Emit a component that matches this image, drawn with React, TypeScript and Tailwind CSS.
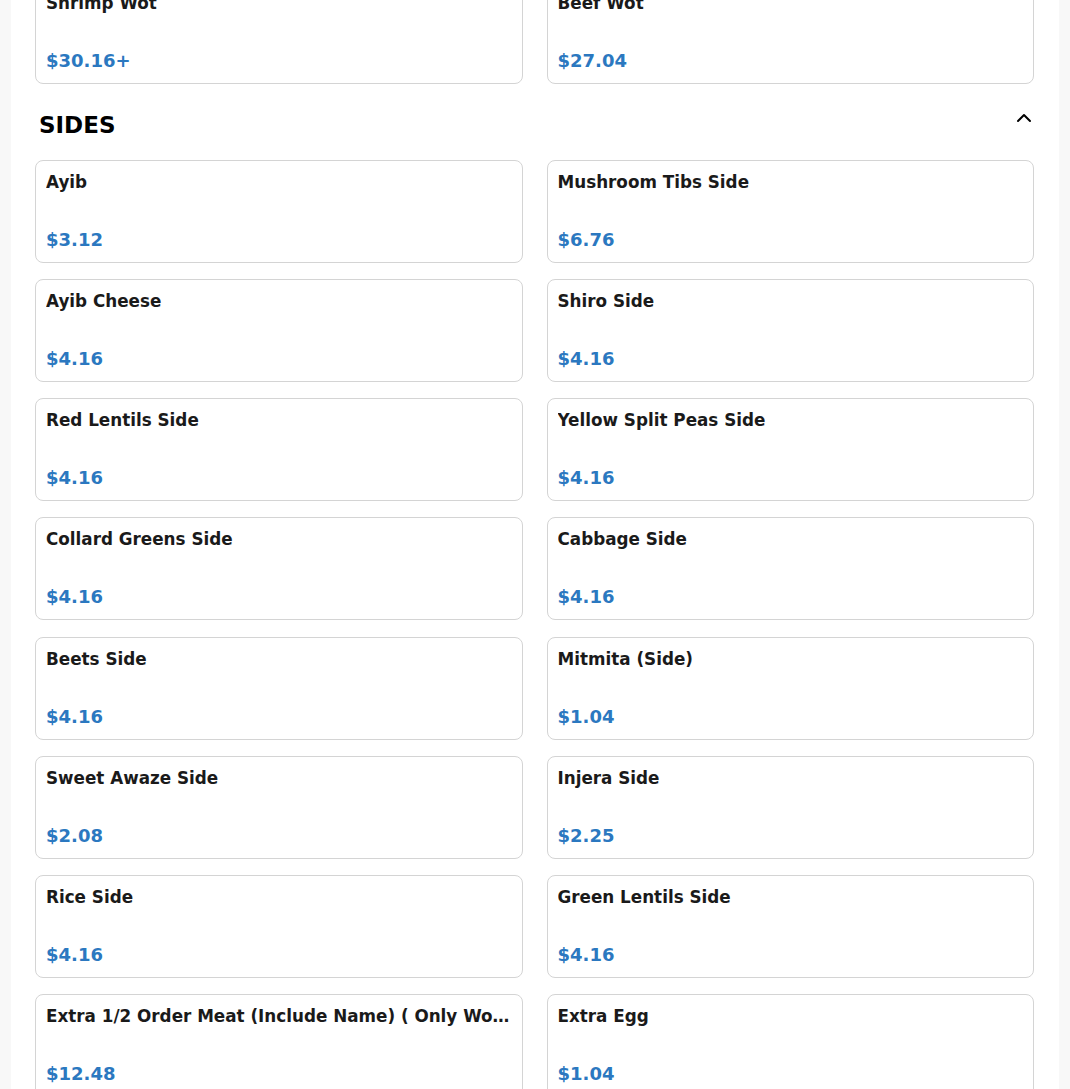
type Item = { name: string; price: string };

const previous: Item[] = [
  { name: "Shrimp Wot", price: "$30.16+" },
  { name: "Beef Wot", price: "$27.04" },
];

const sides: Item[] = [
  { name: "Ayib", price: "$3.12" },
  { name: "Mushroom Tibs Side", price: "$6.76" },
  { name: "Ayib Cheese", price: "$4.16" },
  { name: "Shiro Side", price: "$4.16" },
  { name: "Red Lentils Side", price: "$4.16" },
  { name: "Yellow Split Peas Side", price: "$4.16" },
  { name: "Collard Greens Side", price: "$4.16" },
  { name: "Cabbage Side", price: "$4.16" },
  { name: "Beets Side", price: "$4.16" },
  { name: "Mitmita (Side)", price: "$1.04" },
  { name: "Sweet Awaze Side", price: "$2.08" },
  { name: "Injera Side", price: "$2.25" },
  { name: "Rice Side", price: "$4.16" },
  { name: "Green Lentils Side", price: "$4.16" },
  { name: "Extra 1/2 Order Meat (Include Name) ( Only Works With Combos )", price: "$12.48" },
  { name: "Extra Egg", price: "$1.04" },
];

function MenuCard({ item }: { item: Item }) {
  return (
    <div className="flex h-[103px] min-w-0 flex-col justify-between rounded-lg border border-[#d4d4d4] bg-white px-[10px] py-[9px]">
      <h3 className="truncate text-[16.8px] font-bold leading-[24px] text-[#1a1a1a]">
        {item.name}
      </h3>
      <p className="text-[18px] font-bold leading-[27px] text-[#2b78c0]">
        {item.price}
      </p>
    </div>
  );
}

export default function App() {
  return (
    <div
      className="min-h-screen bg-[#f8f8f8]"
      style={{ fontFamily: '"DejaVu Sans", "Liberation Sans", sans-serif' }}
    >
      <main className="mx-[11px] min-h-screen overflow-hidden bg-white pl-6 pr-[25px]">
        <section className="-mt-[19px] grid grid-cols-2 gap-x-6 gap-y-[16.14px]">
          {previous.map((item) => (
            <MenuCard key={item.name} item={item} />
          ))}
        </section>
        <section>
          <div className="mt-[24px] mb-[18px] flex items-start justify-between pl-1">
            <h2 className="text-[23px] font-bold leading-[34px] text-black">SIDES</h2>
            <svg
              viewBox="0 0 16 10"
              className="mt-[5px] mr-[2px] h-[10px] w-[16px]"
              fill="none"
              stroke="black"
              strokeWidth="2"
              strokeLinecap="round"
              strokeLinejoin="round"
            >
              <polyline points="2,8 8,2 14,8" />
            </svg>
          </div>
          <div className="grid grid-cols-2 gap-x-6 gap-y-[16.14px]">
            {sides.map((item) => (
              <MenuCard key={item.name} item={item} />
            ))}
          </div>
        </section>
      </main>
    </div>
  );
}
